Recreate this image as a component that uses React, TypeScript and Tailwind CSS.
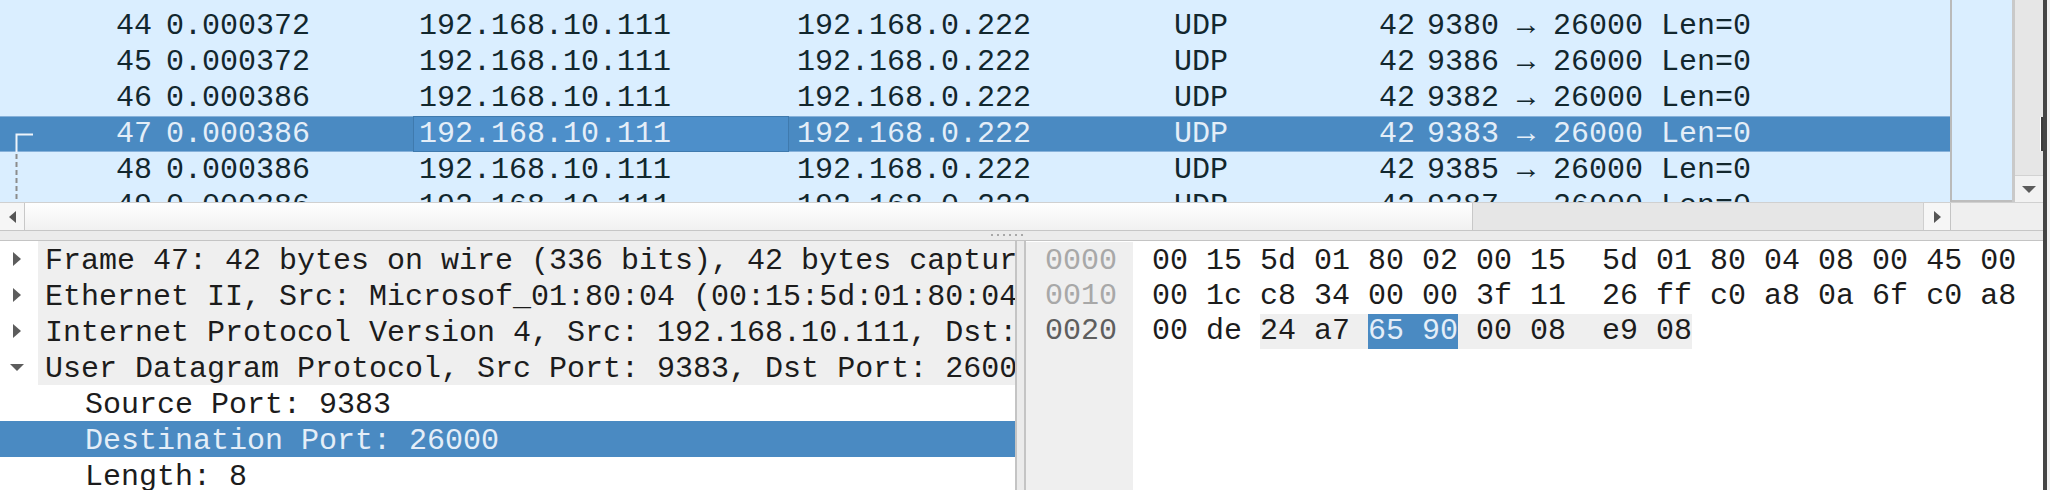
import React from 'react'

interface Packet {
  no: number
  time: string
  src: string
  dst: string
  proto: string
  len: number
  info: string
}

const packets: Packet[] = [
  { no: 44, time: '0.000372', src: '192.168.10.111', dst: '192.168.0.222', proto: 'UDP', len: 42, info: '9380 → 26000 Len=0' },
  { no: 45, time: '0.000372', src: '192.168.10.111', dst: '192.168.0.222', proto: 'UDP', len: 42, info: '9386 → 26000 Len=0' },
  { no: 46, time: '0.000386', src: '192.168.10.111', dst: '192.168.0.222', proto: 'UDP', len: 42, info: '9382 → 26000 Len=0' },
  { no: 47, time: '0.000386', src: '192.168.10.111', dst: '192.168.0.222', proto: 'UDP', len: 42, info: '9383 → 26000 Len=0' },
  { no: 48, time: '0.000386', src: '192.168.10.111', dst: '192.168.0.222', proto: 'UDP', len: 42, info: '9385 → 26000 Len=0' },
  { no: 49, time: '0.000386', src: '192.168.10.111', dst: '192.168.0.222', proto: 'UDP', len: 42, info: '9387 → 26000 Len=0' },
]

const SELECTED = 47

function PacketRow({ p }: { p: Packet }) {
  const sel = p.no === SELECTED
  return (
    <div
      className={`flex h-[36px] shrink-0 items-center whitespace-pre ${
        sel
          ? 'bg-[#4a8ac2] text-[#e4eef8] shadow-[inset_0_1px_0_#86b1da,inset_0_-1px_0_#86b1da]'
          : 'text-[#12272e]'
      }`}
    >
      <div className="w-[157px] shrink-0 pr-[5px] text-right">{p.no}</div>
      <div className="w-[256px] shrink-0 pl-[9px]">{p.time}</div>
      <div
        className={`flex h-full w-[376px] shrink-0 items-center pl-[6px] ${
          sel ? 'bg-[#4d8fca] shadow-[inset_0_0_0_1px_#3f7aae]' : ''
        }`}
      >
        {p.src}
      </div>
      <div className="w-[377px] shrink-0 pl-[8px]">{p.dst}</div>
      <div className="w-[134px] shrink-0 pl-[8px]">{p.proto}</div>
      <div className="w-[120px] shrink-0 pr-[5px] text-right">{p.len}</div>
      <div className="flex-1 pl-[7px]">{p.info}</div>
    </div>
  )
}

function RightTri({ className = '' }: { className?: string }) {
  return (
    <svg width="8" height="14" viewBox="0 0 8 14" className={className}>
      <polygon points="0,0 8,7 0,14" fill="#5c5c5c" />
    </svg>
  )
}

function DownTri({ className = '' }: { className?: string }) {
  return (
    <svg width="14" height="7" viewBox="0 0 14 7" className={className}>
      <polygon points="0,0 14,0 7,7" fill="#5c5c5c" />
    </svg>
  )
}

const treeTop = [
  { text: 'Frame 47: 42 bytes on wire (336 bits), 42 bytes captured (336 bits)', open: false },
  { text: 'Ethernet II, Src: Microsof_01:80:04 (00:15:5d:01:80:04), Dst: Microsof_01:80:02 (00:15:5d:01:80:02)', open: false },
  { text: 'Internet Protocol Version 4, Src: 192.168.10.111, Dst: 192.168.0.222', open: false },
  { text: 'User Datagram Protocol, Src Port: 9383, Dst Port: 26000', open: true },
]

const treeChildren = [
  { text: 'Source Port: 9383', selected: false },
  { text: 'Destination Port: 26000', selected: true },
  { text: 'Length: 8', selected: false },
]

export default function App() {
  return (
    <div className="flex h-[490px] w-[2050px] overflow-hidden bg-white font-['Liberation_Mono',monospace] text-[30px]">
      {/* main area */}
      <div className="flex w-[2043px] shrink-0 flex-col">
        {/* packet list */}
        <div className="flex h-[202px] shrink-0">
          <div className="relative flex w-[1950px] shrink-0 flex-col overflow-hidden bg-[#daeeff] pt-[8px]">
            {packets.map((p) => (
              <PacketRow key={p.no} p={p} />
            ))}
            {/* related packet bracket */}
            <svg className="absolute left-0 top-0" width="40" height="202" viewBox="0 0 40 202">
              <path d="M33 134.5 H16.5 V152" stroke="#eef4fa" strokeWidth="2" fill="none" />
              <path d="M16.5 154 V202" stroke="#8c8c8c" strokeWidth="2" strokeDasharray="5 3" fill="none" />
            </svg>
          </div>
          <div className="w-[2px] shrink-0 bg-[#bababa]" />
          <div className="flex w-[60px] shrink-0 flex-col">
            <div className="flex-1 bg-[#daeeff]" />
            <div className="h-[2px] bg-[#bdbdbd]" />
          </div>
          <div className="w-[3px] shrink-0 bg-[#c9c9c9]" />
          <div className="relative flex w-[28px] shrink-0 flex-col bg-[#e6e6e6]">
            <div className="flex-1" />
            <div className="flex h-[27px] items-center justify-center border-t border-[#d2d2d2] bg-[#f2f2f2]">
              <DownTri />
            </div>
            <div className="absolute right-0 top-[117px] h-[34px] w-[3px] border-l border-white bg-[#3c3c3c]" />
          </div>
        </div>

        {/* horizontal scrollbar */}
        <div className="flex h-[28px] shrink-0 border-t border-[#d0d0d0]">
          <div className="flex w-[25px] shrink-0 items-center justify-center border-r border-[#c8c8c8] bg-[#f6f6f6]">
            <svg width="7" height="12" viewBox="0 0 7 12">
              <polygon points="7,0 0,6 7,12" fill="#555555" />
            </svg>
          </div>
          <div className="w-[1448px] shrink-0 border-r border-[#c8c8c8] bg-gradient-to-b from-[#fefefe] to-[#f1f1f1]" />
          <div className="w-[450px] shrink-0 bg-[#e6e6e6]" />
          <div className="flex w-[27px] shrink-0 items-center justify-center border-l border-[#cfcfcf] bg-[#f6f6f6]">
            <svg width="7" height="12" viewBox="0 0 7 12">
              <polygon points="0,0 7,6 0,12" fill="#555555" />
            </svg>
          </div>
          <div className="flex-1 border-l border-[#c4c4c4] bg-[#efefef]" />
        </div>

        {/* splitter */}
        <div className="flex h-[10px] shrink-0 items-start justify-center border-t border-[#c6c6c6] bg-[#ebebeb] pt-[3px]">
          <div className="ml-[-30px] flex gap-[4px]">
            {[0, 1, 2, 3, 4, 5].map((i) => (
              <div key={i} className="h-[2px] w-[2px] bg-[#a8a8a8]" />
            ))}
          </div>
        </div>

        {/* detail + bytes */}
        <div className="flex h-[250px] shrink-0 border-t border-[#c4c4c4]">
          {/* tree */}
          <div className="w-[1017px] shrink-0 overflow-hidden border-r-2 border-[#c4c4c4] bg-white text-[#1c1c1c]">
            {treeTop.map((r) => (
              <div key={r.text} className="flex h-[36px] items-center">
                <div className="flex w-[38px] shrink-0 items-center">
                  {r.open ? <DownTri className="ml-[10px]" /> : <RightTri className="ml-[13px]" />}
                </div>
                <div className="flex h-full flex-1 items-center overflow-hidden whitespace-pre bg-[#efefef] pl-[7px] pt-[4px]">
                  {r.text}
                </div>
              </div>
            ))}
            {treeChildren.map((r) => (
              <div
                key={r.text}
                className={`flex h-[36px] items-center whitespace-pre pl-[85px] pt-[4px] ${
                  r.selected ? 'bg-[#4a8ac2] text-[#e4eef8]' : ''
                }`}
              >
                {r.text}
              </div>
            ))}
          </div>

          <div className="w-[7px] shrink-0 bg-[#ebebeb]" />

          {/* hex */}
          <div className="flex flex-1 border-l-2 border-[#c4c4c4] bg-white pt-[1px] leading-[35px]">
            <div className="w-[107px] shrink-0 bg-[#efefef] pl-[19px] pt-[2px]">
              <div className="text-[#a8a8a8]">0000</div>
              <div className="text-[#a8a8a8]">0010</div>
              <div className="text-[#5e5e5e]">0020</div>
            </div>
            <div className="flex-1 whitespace-pre pl-[19px] pt-[2px] text-[#1c1c1c]">
              <div>00 15 5d 01 80 02 00 15  5d 01 80 04 08 00 45 00</div>
              <div>00 1c c8 34 00 00 3f 11  26 ff c0 a8 0a 6f c0 a8</div>
              <div className="flex">
                <span>00 de </span>
                <span className="bg-[#efefef]">24 a7 </span>
                <span className="bg-[#4a8ac2] text-[#e4eef8]">65 90</span>
                <span className="bg-[#efefef]"> 00 08  e9 08</span>
              </div>
            </div>
          </div>
        </div>
      </div>

      {/* window edge */}
      <div className="w-[4px] shrink-0 bg-[#454545]" />
      <div className="flex-1 bg-[#f2f2f2]" />
    </div>
  )
}
